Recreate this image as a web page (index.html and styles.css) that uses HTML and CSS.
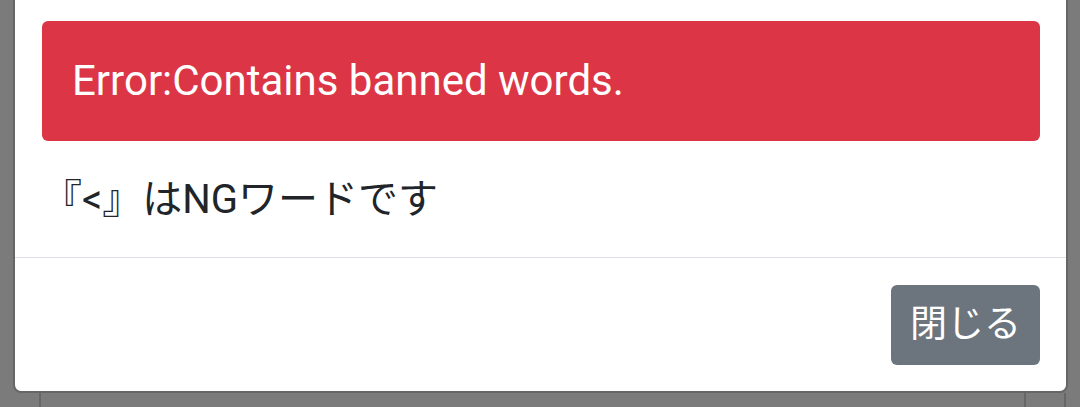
FILE: index.html
```html
<!DOCTYPE html>
<html lang="ja">
<head>
  <meta charset="UTF-8">
  <meta name="viewport" content="width=device-width, initial-scale=1.0">
  <title>NGワード</title>
  <link rel="stylesheet" href="styles.css">
</head>
<body>

<div class="modal-dialog">
  <div class="modal-content">
    <div class="modal-body">
      <div class="alert alert-danger">Error:Contains banned words.</div>
      <p class="message">『&lt;』はNGワードです</p>
    </div>
    <div class="modal-footer">
      <button class="btn btn-secondary">閉じる</button>
    </div>
  </div>
</div>

<div class="page-under">
  <span class="line line-left"></span>
  <span class="line line-mid"></span>
  <span class="line line-right"></span>
</div>

</body>
</html>
```

FILE: styles.css
```css
body {
  margin: 0;
  height: 407px;
  overflow: hidden;
  background-color: #7b7b7b;
  font-family: Roboto, "Noto Sans CJK JP", sans-serif;
  color: #212529;
}

.modal-dialog {
  margin: 0 12px 0 13px;
}

.modal-content {
  margin-top: -8px;
  background-color: #fff;
  border: 2px solid #666;
  border-radius: 8px;
}

.modal-body {
  padding: 27px 26px 27px 27px;
}

.alert {
  font-size: 42px;
  line-height: 60px;
  padding: 30px 30px;
  border-radius: 6px;
}

.alert-danger {
  background-color: #dc3545;
  color: #fff;
}

.message {
  margin: 29px 0 0 0;
  font-size: 40px;
  line-height: 60px;
}

.modal-footer {
  display: flex;
  justify-content: flex-end;
  border-top: 1px solid #dee2e6;
  padding: 27px 26px 26px 27px;
}

.btn {
  font-family: inherit;
  font-size: 37px;
  line-height: 60px;
  padding: 10px 19px;
  border: none;
  border-radius: 6px;
  cursor: pointer;
}

.btn-secondary {
  background-color: #6c757d;
  color: #fff;
}

.page-under {
  display: flex;
  height: 20px;
}

.line {
  width: 2px;
  background-color: #666;
}

.line-left {
  margin-left: 39px;
}

.line-mid {
  margin-left: 983px;
}

.line-right {
  margin-left: 38px;
}
```
